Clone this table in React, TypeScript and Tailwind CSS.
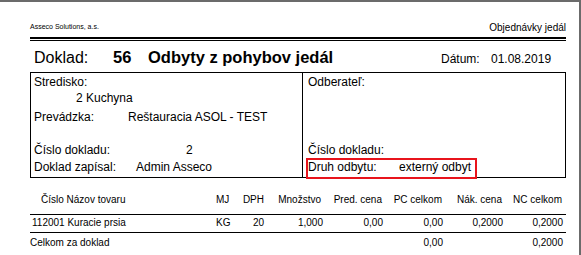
import React from "react";

const font = { fontFamily: '"Liberation Sans", Arial, sans-serif' };

export default function App() {
  return (
    <div
      className="relative w-[581px] h-[255px] overflow-hidden bg-white border-t-2 border-r-2 border-[#6b6b6b] text-black"
      style={font}
    >
      <div className="ml-[30px] w-[536px]">
        {/* header */}
        <div className="flex justify-between items-start h-[35px]">
          <div className="mt-[21px] text-[7px] leading-[8px]">Asseco Solutions, a.s.</div>
          <div className="mt-[20px] text-[10px] leading-[12px]">Objednávky jedál</div>
        </div>
        <div className="h-[4px] border-t-2 border-b border-black" />

        {/* title */}
        <div className="flex items-baseline h-[31px] pt-[6px] pl-[4px]">
          <span className="w-[79px] text-[16px] leading-[20px]">Doklad:</span>
          <span className="w-[35px] text-[16.5px] leading-[20px] font-bold">56</span>
          <span className="flex-1 text-[16.5px] leading-[20px] font-bold">Odbyty z pohybov jedál</span>
          <span className="w-[50px] text-[12px] leading-[20px]">Dátum:</span>
          <span className="w-[75px] text-[12px] leading-[20px]">01.08.2019</span>
        </div>

        {/* box */}
        <div className="relative flex h-[106px] border border-black text-[12px] leading-[15px]">
          <div className="w-[272px] border-r border-black pl-[3px] pt-[2px]">
            <div>Stredisko:</div>
            <div className="mt-[1px] pl-[42px]">2 Kuchyna</div>
            <div className="mt-[4px] flex">
              <span className="w-[94px]">Prevádzka:</span>
              <span>Reštauracia ASOL - TEST</span>
            </div>
            <div className="mt-[18px] flex">
              <span className="w-[152px]">Číslo dokladu:</span>
              <span>2</span>
            </div>
            <div className="mt-[2px] flex">
              <span className="w-[102px]">Doklad zapísal:</span>
              <span>Admin Asseco</span>
            </div>
          </div>
          <div className="flex-1 pl-[5px] pt-[2px]">
            <div>Odberateľ:</div>
            <div className="mt-[53px]">Číslo dokladu:</div>
            <div className="mt-[2px] flex">
              <span className="w-[91px]">Druh odbytu:</span>
              <span>externý odbyt</span>
            </div>
          </div>
          <div className="absolute left-[275px] top-[85px] w-[171px] h-[21px] border-2 border-[#e8141c]" />
        </div>

        {/* table */}
        <div className="text-[10px] leading-[12px]">
          <div className="grid grid-cols-[186px_24px_24px_59px_60px_60px_60px_60px] h-[37px] pt-[16px] border-b border-black">
            <div className="pl-[11px]">Číslo Názov tovaru</div>
            <div>MJ</div>
            <div className="text-right">DPH</div>
            <div className="text-right pr-[2px]">Množstvo</div>
            <div className="text-right pr-[1px]">Pred. cena</div>
            <div className="text-right pr-[1px]">PC celkom</div>
            <div className="text-right pr-[1px]">Nák. cena</div>
            <div className="text-right pr-[1px]">NC celkom</div>
          </div>
          <div className="grid grid-cols-[186px_24px_24px_59px_60px_60px_60px_60px] h-[18px] pt-[2px] border-b border-black">
            <div className="pl-[2px]">112001 Kuracie prsia</div>
            <div>KG</div>
            <div className="text-right">20</div>
            <div className="text-right">1,000</div>
            <div className="text-right">0,00</div>
            <div className="text-right">0,00</div>
            <div className="text-right">0,2000</div>
            <div className="text-right">0,2000</div>
          </div>
          <div className="grid grid-cols-[186px_24px_24px_59px_60px_60px_60px_60px] pt-[4px]">
            <div>Celkom za doklad</div>
            <div />
            <div />
            <div />
            <div />
            <div className="text-right">0,00</div>
            <div />
            <div className="text-right">0,2000</div>
          </div>
        </div>
      </div>
    </div>
  );
}
